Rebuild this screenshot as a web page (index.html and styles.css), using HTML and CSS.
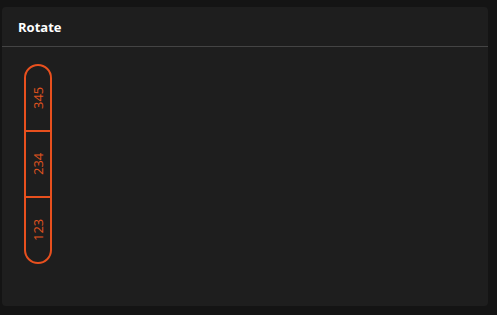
FILE: index.html
```html
<!DOCTYPE html>
<html>
<head>
<meta charset="utf-8">
<link rel="stylesheet" href="styles.css">
</head>
<body>
  <div class="card">
    <div class="card-header">Rotate</div>
    <div class="card-body">
      <div class="btn-group">
        <button class="seg">123</button>
        <button class="seg">234</button>
        <button class="seg">345</button>
      </div>
    </div>
  </div>
</body>
</html>
```
FILE: styles.css
```css
html, body {
  margin: 0;
  background: #141414;
}
body {
  padding: 7px 9px 9px 2px;
  font-family: "Open Sans", "Noto Sans", sans-serif;
}
.card {
  background: #1e1e1e;
  border-radius: 4px;
  height: 299px;
  box-sizing: border-box;
}
.card-header {
  height: 40px;
  box-sizing: border-box;
  padding: 0 16px;
  display: flex;
  align-items: center;
  color: #ffffff;
  font-weight: 700;
  font-size: 13px;
  border-bottom: 1px solid #444444;
}
.card-body {
  padding: 17px 22px;
}
.btn-group {
  writing-mode: vertical-rl;
  transform: rotate(180deg);
  display: flex;
  height: 200px;
  width: 28px;
  box-sizing: border-box;
  border: 2px solid #e8501e;
  border-radius: 14px;
  overflow: hidden;
}
.seg {
  flex: 1;
  background: transparent;
  border: none;
  padding: 0;
  margin: 0;
  color: #e0541f;
  font-family: "Open Sans", "Noto Sans", sans-serif;
  font-size: 13px;
  display: flex;
  align-items: center;
  justify-content: center;
}
.seg + .seg {
  border-inline-start: 2px solid #e8501e;
}
```
